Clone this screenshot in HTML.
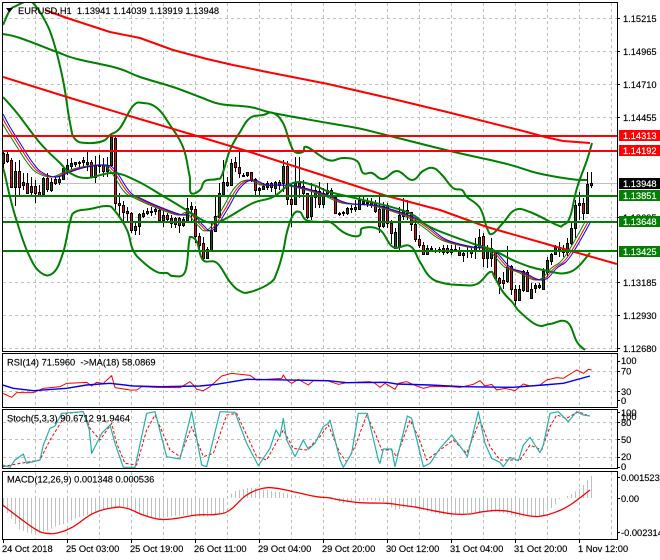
<!DOCTYPE html>
<html><head><meta charset="utf-8"><style>
html,body{margin:0;padding:0;background:#fff;width:660px;height:560px;overflow:hidden}
svg{display:block;position:absolute;left:0;top:0}
text{font-family:"Liberation Sans",sans-serif;font-size:9.3px;fill:#000;stroke:#000;stroke-width:.15px}
.w{fill:#fff;stroke:#fff}
</style></head><body>
<svg id="c" width="660" height="560" viewBox="0 0 660 560" xmlns="http://www.w3.org/2000/svg">
<defs>
<clipPath id="m"><rect x="3" y="3" width="614" height="348"/></clipPath>
<clipPath id="p1"><rect x="3" y="354" width="614" height="53"/></clipPath>
<clipPath id="p2"><rect x="3" y="410" width="614" height="58"/></clipPath>
<clipPath id="p3"><rect x="3" y="472" width="614" height="67"/></clipPath>
</defs>
<g id="grid"></g>
<g id="main" clip-path="url(#m)"></g>
<g id="g1" clip-path="url(#p1)"></g>
<g id="g2" clip-path="url(#p2)"></g>
<g id="g3" clip-path="url(#p3)"></g>
<g fill="none" stroke="#000" stroke-width="1" shape-rendering="crispEdges">
<path d="M2.5 2.5H617.5V351.5H2.5Z"/>
<path d="M2.5 353.5H617.5V407.5H2.5Z"/>
<path d="M2.5 409.5H617.5V468.5H2.5Z"/>
<path d="M2.5 471.5H617.5V539.5H2.5Z"/>
<path d="M617 18.5h3M617 51.5h3M617 84.5h3M617 117.5h3M617 217.5h3M617 282.5h3M617 315.5h3M617 348.5h3"/>
<path d="M617 361.5h3M617 371.5h3M617 391.5h3M617 400.5h3M617 412.5h3M617 422.5h3M617 439.5h3M617 457.5h3M617 467.5h3M617 477.5h3M617 498.5h3M617 532.5h3"/>
<path d="M3.5 540v3M67.5 540v3M131.5 540v3M195.5 540v3M259.5 540v3M323.5 540v3M387.5 540v3M451.5 540v3M515.5 540v3M579.5 540v3"/>
</g>
<path d="M6 8h7l-3.5 4.500z" fill="#000"/>
<text x="18" y="14">EURUSD,H1&#160;&#160;1.13941 1.14039 1.13919 1.13948</text>
<text x="7" y="365.5">RSI(14) 71.5960&#160;&#160;-&gt;MA(18) 58.0869</text>
<text x="7" y="421.5">Stoch(5,3,3) 90.6712 91.9464</text>
<text x="7" y="482.5">MACD(12,26,9) 0.001348 0.000536</text>
<g>
<text x="623" y="22">1.15215</text>
<text x="623" y="55">1.14965</text>
<text x="623" y="88">1.14710</text>
<text x="623" y="121">1.14455</text>
<text x="623" y="221">1.13695</text>
<text x="623" y="286">1.13185</text>
<text x="623" y="319">1.12930</text>
<text x="623" y="352">1.12680</text>
</g>
<g shape-rendering="crispEdges">
<rect x="619" y="130" width="41" height="11" fill="#ff0000"/>
<rect x="619" y="145" width="41" height="11" fill="#ff0000"/>
<rect x="619" y="178" width="41" height="11" fill="#000"/>
<rect x="619" y="190" width="41" height="11" fill="#008000"/>
<rect x="619" y="216" width="41" height="11" fill="#008000"/>
<rect x="619" y="246" width="41" height="11" fill="#008000"/>
</g>
<text class="w" x="623" y="139">1.14313</text>
<text class="w" x="623" y="154">1.14192</text>
<text class="w" x="623" y="187">1.13948</text>
<text class="w" x="623" y="199">1.13851</text>
<text class="w" x="623" y="225">1.13648</text>
<text class="w" x="623" y="255">1.13425</text>
<g>
<text x="621" y="364">100</text>
<text x="621" y="374.500">70</text>
<text x="621" y="395">30</text>
<text x="621" y="404">0</text>
<text x="621" y="416">100</text>
<text x="621" y="420">100</text>
<text x="621" y="426">80</text>
<text x="621" y="443">50</text>
<text x="621" y="460">20</text>
<text x="621" y="470">0</text>
<text x="621" y="481">0.001523</text>
<text x="621" y="502">0.00</text>
<text x="621" y="536">-0.002314</text>
</g>
<g>
<text x="2" y="552">24 Oct 2018</text>
<text x="66" y="552">25 Oct 03:00</text>
<text x="130" y="552">25 Oct 19:00</text>
<text x="194" y="552">26 Oct 11:00</text>
<text x="258" y="552">29 Oct 04:00</text>
<text x="322" y="552">29 Oct 20:00</text>
<text x="386" y="552">30 Oct 12:00</text>
<text x="450" y="552">31 Oct 04:00</text>
<text x="514" y="552">31 Oct 20:00</text>
<text x="578" y="552">1 Nov 12:00</text>
</g>
</svg>
<script>
var NS="http://www.w3.org/2000/svg";
function el(p,n,a){var e=document.createElementNS(NS,n);for(var k in a)e.setAttribute(k,a[k]);document.getElementById(p).appendChild(e);return e}
function line(p,pts,col,w,extra){var a={points:pts.map(function(q){return q[0]+','+q[1]}).join(' '),fill:'none',stroke:col,'stroke-width':w,'stroke-linejoin':'round'};for(var k in extra||{})a[k]=extra[k];el(p,'polyline',a)}
function curve(p,pts,col,w){var d='M'+pts[0][0]+' '+pts[0][1];for(var i=0;i<pts.length-1;i++){var a=pts[Math.max(0,i-1)],b=pts[i],c=pts[i+1],e=pts[Math.min(pts.length-1,i+2)];
 var s=5;d+='C'+(b[0]+(c[0]-a[0])/s).toFixed(1)+' '+(b[1]+(c[1]-a[1])/s).toFixed(1)+' '+(c[0]-(e[0]-b[0])/s).toFixed(1)+' '+(c[1]-(e[1]-b[1])/s).toFixed(1)+' '+c[0].toFixed(1)+' '+c[1].toFixed(1)}
 el(p,'path',{d:d,fill:'none',stroke:col,'stroke-width':w,'stroke-linejoin':'round'})}
function Z(ox,oy,f){var r=[];for(var i=0;i<f.length;i+=2)r.push([ox+f[i]/3,oy+f[i+1]/3]);return r}
function A(f){var r=[];for(var i=0;i<f.length;i+=2)r.push([f[i],f[i+1]]);return r}
var gd={stroke:'#c0c0c0','stroke-width':1,'stroke-dasharray':'3 3','shape-rendering':'crispEdges'};
function gl(x1,y1,x2,y2){var a={x1:x1,y1:y1,x2:x2,y2:y2};for(var k in gd)a[k]=gd[k];el('grid','line',a)}
for(var x=35.5;x<617;x+=32){gl(x,3,x,351);gl(x,354,x,407);gl(x,410,x,468);gl(x,472,x,539)}
[18.5,51.5,84.5,117.5,217.5,250.5,282.5,315.5,348.5].forEach(function(y){gl(3,y,617,y)});
[371.5,391.5,422.5,439.5,457.5].forEach(function(y){gl(3,y,617,y)});
el('main','line',{x1:3,y1:183.5,x2:617,y2:183.5,stroke:'#c0c0c0','stroke-width':1,'shape-rendering':'crispEdges'});
var S1=[['g',60,70,100,120],['r',62,72,92,100],['r',85,90,172,175],['g',95,122,172,228],['r',90,122,172,195],['g',130,155,165,180],['r',130,160,188,190],['g',140,168,185,195],['r',150,168,190,218],['r',165,185,195,200],['g',140,145,193,195],['r',130,145,178,185],['g',145,155,180,185],['r',140,148,160,165],['g',140,148,155,165],['g',108,113,148,150],['g',88,105,118,135],['g',85,100,107,118],['g',95,97,102,110],['g',92,95,100,118],['g',80,90,96,110],['g',65,97,103,122],['r',90,97,140,140],['g',78,105,140,160],['g',75,104,108,130],['r',85,105,122,140],['g',80,105,122,140],['g',8,20,105,110],['r',15,25,218,240],['r',190,218,225,258],['r',212,225,245,275],['r',230,243,250,275],['r',245,250,300,310],['g',280,288,300,315],['g',250,253,288,315],['g',240,248,258,263],['g',235,243,248,255],['g',232,243,247,258],['r',232,238,243,255],['r',235,240,270,272],['g',240,255,270,290],['r',250,255,268,272],['r',255,265,280,295],['g',260,265,282,295],['r',260,265,285,308],['g',262,268,285,290],['g',205,235,270,275],['g',215,228,238,280],['r',228,238,318,340],['r',310,318,345,360]];
var S2=[['r',290,310,355,360],['g',320,328,355,358],['g',250,270,330,333],['g',165,228,272,275],['g',130,160,230,232],['g',60,125,162,165],['g',112,125,135,140],['g',58,68,135,138],['r',50,65,82,95],['r',30,82,100,115],['g',100,104,108,112],['g',95,97,105,110],['r',95,97,120,125],['r',115,118,150,170],['g',140,145,150,165],['g',130,138,147,150],['g',122,130,140,150],['r',125,130,142,155],['g',122,127,143,165],['r',120,127,135,150],['g',60,78,130,155],['r',62,78,178,195],['r',130,178,192,262],['g',50,130,192,195],['r',50,130,137,175],['r',120,137,160,210],['r',158,160,232,238],['g',130,165,228,240],['g',140,150,170,205],['r',125,152,192,205],['g',145,160,193,205],['g',130,150,160,165],['r',145,150,170,175],['r',165,170,220,222],['g',215,218,222,228],['g',212,217,220,228],['g',200,205,218,225],['g',195,203,206,218],['g',180,202,206,215],['g',172,180,208,210],['g',170,182,190,195],['g',175,185,190,200],['r',175,185,195,205],['r',180,190,213,220],['r',160,208,258,278],['g',185,197,258,265],['r',190,195,248,265],['r',240,248,280,312],['g',265,275,325,328],['g',200,225,320,330]];
var S3=[['g',85,120,138,150],['g',90,120,130,150],['r',125,125,163,183],['r',150,163,207,215],['r',195,207,225,235],['r',215,225,252,255],['g',225,235,252,255],['g',228,235,238,245],['g',235,239,242,250],['g',232,238,241,250],['r',225,233,247,255],['r',225,233,247,253],['g',225,237,247,255],['g',225,238,241,245],['r',232,240,255,258],['g',240,250,255,275],['g',232,240,243,265],['r',230,240,248,265],['g',205,228,240,268],['g',178,202,230,240],['r',190,198,265,292],['g',225,240,265,295],['g',205,233,265,290],['r',240,243,325,328],['r',320,323,340,372],['r',305,330,340,358],['g',228,290,332,340],['r',285,288,358,375],['r',345,358,390,405],['g',345,358,390,392],['g',300,303,360,365],['r',300,305,362,365],['g',340,357,385,388],['g',340,345,355,368],['g',340,345,350,358],['g',295,303,357,360],['g',260,270,305,320],['g',250,252,272,285],['g',225,230,252,255],['g',215,232,243,262],['r',225,235,245,262],['g',205,218,245,258],['g',160,175,218,225],['g',90,105,175,205],['g',65,100,105,150],['r',85,100,130,150],['g',5,42,130,132],['g',5,40,44,55]];
function cnd(k,c,b){var x=3+4*k,t=c[0],y=function(v){return Math.round(b+v/3)};
 var wt=y(c[1]),bt=y(c[2]),bb=y(c[3]),wb=y(c[4]);if(bb<=bt)bb=bt+1;
 el('main','rect',{x:x,y:wt,width:1,height:Math.max(1,wb-wt),fill:'#000','shape-rendering':'crispEdges'});
 el('main','rect',{x:x-1,y:bt,width:3,height:bb-bt+1,fill:'#000','shape-rendering':'crispEdges'});
 if(bb-bt>1)el('main','rect',{x:x,y:bt+1,width:1,height:bb-bt-1,fill:t=='g'?'#006400':'#ff0000','shape-rendering':'crispEdges'});
}
S1.forEach(function(c,i){cnd(i,c,130)});S2.forEach(function(c,i){cnd(i+50,c,140)});S3.forEach(function(c,i){cnd(i+100,c,170)});
var blue=A([3,114,10,127,20,143,33,163,43,173,57,177,70,172,87,167,107,165,115,170,120,177,130,192,140,198,160,207,183,215,192,213,203,225,213,230,227,210,240,188,253,180,267,185,283,185,300,187,328,195,347,203,373,205,387,208,413,217,430,228,447,240,473,247,493,250,510,267,523,272,543,280,557,268,570,257,590,223]);
function shift(p,dx,dy){return p.map(function(q){return [q[0]+dx,q[1]+dy]})}
curve('main',shift(blue,-5.5,0),'#008000',1);
curve('main',shift(blue,-2.5,0),'#ff0000',1);
curve('main',blue,'#0000ff',1);
var G='#008000',R='#ff0000';
curve('main',A([3,34,20,38,57,52,77,59,117,68,140,77,173,87,200,97,220,104,250,107,273,113,328,123,357,128,390,136,450,151,507,164,537,173,570,179,587,180]),G,2);
curve('main',A([3,25,10,10,16,6,22,3,28,1,33,3,43,17,53,40,63,80,70,123,75,139,87,143,103,141,110,135,120,128,133,106,143,103,157,108,170,125,183,147,189,173,190,180,191,193,200,190,205,181,217,179,222,175,230,150,240,132,250,118,263,115,273,113,283,123,290,143,295,152,303,152,307,147,328,160,343,158,357,161,363,173,372,173,383,179,397,171,412,180,423,171,433,168,442,175,453,188,462,190,467,197,480,208,487,228,492,234,503,223,515,210,530,212,557,225,563,225,570,217,577,188,587,160,592,143]),G,2);
curve('main',A([3,97,17,113,40,143,60,163,70,173,87,178,113,173,137,181,163,196,183,208,197,217,207,222,217,222,227,218,253,203,273,197,293,183,313,185,330,192,363,200,407,212,430,227,463,240,477,245,493,250,517,262,543,270,570,272,590,253]),G,2);
curve('main',A([3,168,5,175,10,197,17,222,28,253,40,272,53,273,63,253,70,222,75,212,90,209,107,206,115,211,127,230,133,250,143,262,157,272,167,273,173,276,185,272,189,242,191,237,197,242,203,260,217,263,230,282,240,291,250,292,270,283,277,272,283,252,287,232,293,215,300,212,306,220,320,222,330,222,343,232,353,236,360,235,363,228,380,230,393,247,410,246,420,262,430,277,443,283,460,285,477,284,490,272,495,278,503,292,513,303,520,312,537,325,550,324,567,322,577,342,585,350]),G,2);
line('main',A([45,10,67,18,110,32,140,38,173,50,207,59,233,65,267,72,328,84,393,99,447,112,527,132,545,137,563,141,590,143]),R,2);
line('main',A([3,77,67,97,133,117,197,136,250,152,328,177,387,196,440,210,487,227,550,245,617,264]),R,2);
[[136,R],[151,R],[196,G],[222,G],[251,G]].forEach(function(h){el('main','rect',{x:3,y:h[0]-1,width:614,height:2,fill:h[1],'shape-rendering':'crispEdges'})});
/* RSI */
line('g1',Z(0,350,[8,130,35,142,50,128,100,128,130,115,180,110,200,100,260,97,275,108,290,97,310,100,335,77,345,113,390,120,410,120,425,110,470,112,540,113,570,95,580,105,590,118,610,122,630,110,665,78,695,70,750,76,770,90,845,85,850,75,860,90,875,100,895,88,925,105,940,92,985,93]).concat(Z(330,350,[25,103,50,98,120,95,135,100,150,112,165,100,195,118,205,100,230,95,260,108,280,115,300,110,360,110,390,112,430,103,450,92,465,108,485,103,500,120,525,115,555,122,580,102,600,108,630,105,650,90,680,83,700,85,740,60,760,70,775,58,785,60])),R,1);
line('g1',Z(0,350,[8,105,40,115,100,122,200,115,260,105,330,100,400,108,480,110,600,108,650,103,740,88,985,92]).concat(Z(330,350,[50,98,170,97,200,102,300,105,400,110,550,112,640,105,700,100,780,78])),'#0000ff',1.4);
/* Stoch */
line('g2',Z(0,350,[8,350,60,340,120,330,150,270,200,190,250,185,270,235,300,270,335,220,350,280,375,340,410,345,440,240,465,195,510,300,540,320,575,230,610,320,640,310,680,195,710,190,770,320,800,330,850,240,880,295,920,300,960,260,985,225]).concat(Z(330,350,[30,310,50,335,75,290,110,195,140,260,155,300,185,300,200,320,240,210,265,260,290,330,330,300,370,270,410,310,450,210,480,290,510,330,530,330,570,330,600,285,635,300,660,230,680,195,710,205,745,185,770,195])),R,1,{'stroke-dasharray':'3 2'});
line('g2',Z(0,350,[8,345,30,352,45,330,70,312,80,340,120,330,130,285,150,235,165,228,185,190,250,185,268,240,275,310,305,250,330,225,345,280,370,352,405,352,440,190,465,185,500,320,540,327,575,185,605,345,620,350,660,185,705,187,740,280,775,347,810,295,828,240,840,260,850,205,860,270,885,320,910,270,925,298,945,280,970,230,985,220]).concat(Z(330,350,[0,210,30,330,40,352,65,310,85,190,112,190,145,330,150,340,160,297,185,297,195,350,232,198,245,205,280,350,300,340,330,295,365,255,395,295,412,320,445,185,465,280,485,325,510,337,520,350,540,322,565,332,580,285,600,262,630,308,640,285,660,190,685,185,715,215,740,185,760,195,780,198])),'#20b2aa',1.2);
/* MACD */
var hist=Z(0,350,[8,468,30,500,60,540,100,552,130,548,165,530,200,518,240,500,280,490,320,475,350,470,395,480,430,495,470,505,510,500,560,495,620,500,670,490,680,445,700,425,750,412,800,420,860,430,900,440,950,445,985,445]).concat(Z(330,350,[40,460,75,455,120,450,160,455,195,480,240,470,280,480,320,492,365,495,400,490,440,488,500,485,570,500,610,500,640,495,680,460,690,445,720,435,750,415,770,395,785,378]));
function interp(x){for(var i=0;i<hist.length-1;i++){if(x>=hist[i][0]&&x<=hist[i+1][0]){var t=(x-hist[i][0])/(hist[i+1][0]-hist[i][0]||1);return hist[i][1]+t*(hist[i+1][1]-hist[i][1])}}return 498}
for(var k=0;k<148;k++){var x=3.5+4*k,y=interp(x);if(Math.abs(y-498)<1)continue;el('g3','line',{x1:x,y1:498,x2:x,y2:y,stroke:'#c0c0c0','stroke-width':1,'shape-rendering':'crispEdges'})}
curve('g3',Z(0,350,[8,465,60,505,110,540,140,550,175,548,220,530,280,490,340,473,380,475,430,495,480,508,530,505,590,495,650,493,690,480,740,435,790,415,830,415,880,425,950,440,985,443]).concat(Z(330,350,[30,450,90,458,170,460,210,465,260,472,310,482,370,492,420,492,460,485,520,482,600,498,640,497,680,485,720,465,780,420])),R,1.3);
</script>
</body></html>
